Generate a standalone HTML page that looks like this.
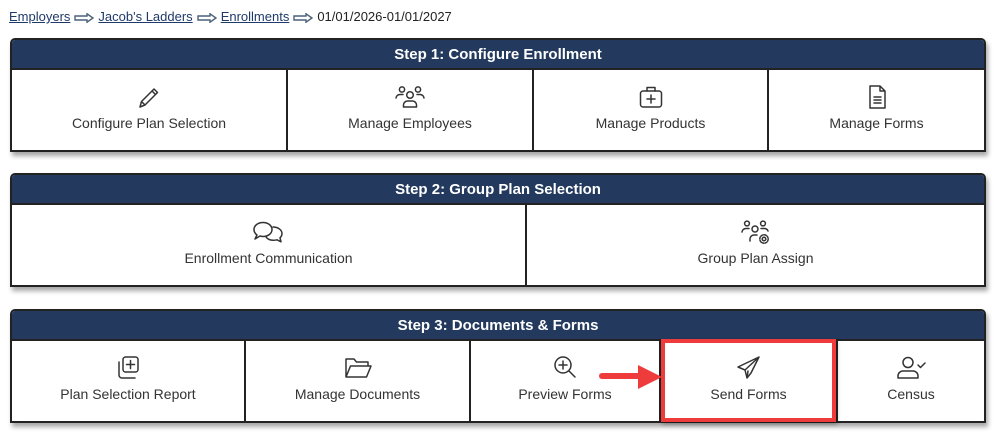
<!DOCTYPE html>
<html><head><style>
*{margin:0;padding:0;box-sizing:border-box}
body{width:999px;height:439px;background:#fff;font-family:"Liberation Sans",sans-serif;position:relative;overflow:hidden;color:#333}
.bc{position:absolute;left:9px;top:9px;font-size:13px;color:#222;white-space:nowrap}
.bc a{color:#1f3a6a;text-decoration:underline}
.ar{display:inline-block;vertical-align:middle;margin:0 4px}
.panel{position:absolute;left:10px;width:976px;border:2px solid #222;border-radius:5px 5px 0 0;box-shadow:2px 4px 5px rgba(0,0,0,.35);background:#fff}
.hd{height:30px;background:#233a5e;color:#fff;font-weight:bold;font-size:15px;text-align:center;line-height:30px;border-bottom:2px solid #222;border-radius:3px 3px 0 0}
.row{display:flex;height:80px}
.c{border-left:2px solid #222;text-align:center;font-size:14px;padding-top:13px;position:relative}
.c:first-child{border-left:none}
.c svg{display:block;margin:0 auto 4px;height:28px;fill:none;stroke:#333;stroke-width:1.5;stroke-linecap:round;stroke-linejoin:round}
</style></head><body>
<div class="bc"><a>Employers</a><svg class="ar" width="20" height="10" viewBox="0 0 20 10"><path d="M1 3h12V0.8L19 5l-6 4.2V7H1z" fill="none" stroke="#4a6078" stroke-width="1.4"/></svg><a>Jacob's Ladders</a><svg class="ar" width="20" height="10" viewBox="0 0 20 10"><path d="M1 3h12V0.8L19 5l-6 4.2V7H1z" fill="none" stroke="#4a6078" stroke-width="1.4"/></svg><a>Enrollments</a><svg class="ar" width="20" height="10" viewBox="0 0 20 10"><path d="M1 3h12V0.8L19 5l-6 4.2V7H1z" fill="none" stroke="#4a6078" stroke-width="1.4"/></svg>01/01/2026-01/01/2027</div>

<div class="panel" style="top:38px;height:114px">
<div class="hd">Step 1: Configure Enrollment</div>
<div class="row">
<div class="c" style="width:274px"><svg width="28" viewBox="0 0 28 28"><path d="M5 24l1.5-5.5L19 6l3.5 3.5L10 22zM17 8l3.5 3.5M6.5 18.5l3.5 3.5"/></svg>Configure Plan Selection</div>
<div class="c" style="width:246px"><svg width="34" viewBox="0 0 34 28"><circle cx="17" cy="12" r="3.3"/><circle cx="9" cy="6.5" r="2.6"/><circle cx="25" cy="6.5" r="2.6"/><path d="M10.5 24v-2a4 4 0 0 1 4-4h5a4 4 0 0 1 4 4v2zM3 15a4 4 0 0 1 4-3.5h3M31 15a4 4 0 0 0-4-3.5h-3"/></svg>Manage Employees</div>
<div class="c" style="width:235px"><svg width="28" viewBox="0 0 28 28"><rect x="3.5" y="8" width="21" height="16" rx="2.5"/><path d="M10 8V4.5h8V8M14 12v8M10 16h8"/></svg>Manage Products</div>
<div class="c" style="flex:1"><svg width="28" viewBox="0 0 28 28"><path d="M7 3h10l5 5v17H7zM17 3v5h5M11 14h7M11 17h7M11 20h7"/></svg>Manage Forms</div>
</div></div>

<div class="panel" style="top:173px;height:114px">
<div class="hd">Step 2: Group Plan Selection</div>
<div class="row">
<div class="c" style="width:513px"><svg width="34" viewBox="0 0 34 28"><path d="M5 17l-2 4 5-3c1 .3 2 .5 3 .5 5 0 9-3 9-7s-4-7-9-7-9 3-9 7c0 2 1 4 3 5.5z"/><path d="M21 9c5 0 9 3 9 6.5 0 1.7-.8 3.2-2 4.3l1 4-4-2c-1.5.4-2.5.5-4 .5-3.5 0-6-1.5-7.5-4"/></svg>Enrollment Communication</div>
<div class="c" style="flex:1"><svg width="34" viewBox="0 0 34 28"><circle cx="16" cy="11" r="3"/><circle cx="8" cy="5.5" r="2.4"/><circle cx="24" cy="5.5" r="2.4"/><path d="M11 23v-2a4 4 0 0 1 4-4h3M3 14a4 4 0 0 1 4-3.5h3M29 13a4 4 0 0 0-4-2.5h-3"/><circle cx="25" cy="21" r="1.8"/><circle cx="25" cy="21" r="4.2" stroke-dasharray="2 1.3"/></svg>Group Plan Assign</div>
</div></div>

<div class="panel" style="top:309px;height:114px">
<div class="hd">Step 3: Documents &amp; Forms</div>
<div class="row">
<div class="c" style="width:232px"><svg width="28" viewBox="0 0 28 28"><rect x="9" y="3" width="15" height="15" rx="2.5"/><path d="M5 8v13a3 3 0 0 0 3 3h13M16.5 6.5v8M12.5 10.5h8"/></svg>Plan Selection Report</div>
<div class="c" style="width:225px"><svg width="30" viewBox="0 0 30 28"><path d="M3 23V5h8l2.5 3H25v4M3 23l4.5-11H28l-4.5 11z"/></svg>Manage Documents</div>
<div class="c" style="width:190px"><svg width="28" viewBox="0 0 28 28"><circle cx="12" cy="11" r="8"/><path d="M12 7v8M8 11h8M18 17l6 6"/></svg>Preview Forms</div>
<div class="c" style="width:177px"><svg width="28" viewBox="0 0 28 28"><path d="M24 3L3 13l7 3 2 8 4-5 8-16zM10 16l14-13M12 24l1-7"/></svg>Send Forms</div>
<div class="c" style="flex:1"><svg width="34" viewBox="0 0 34 28"><circle cx="14" cy="8.5" r="5"/><path d="M4 24v-2a5 5 0 0 1 5-5h10a5 5 0 0 1 5 5v2zM24 11l2.5 2.5L31 9"/></svg>Census</div>
</div></div>

<div style="position:absolute;left:661px;top:339px;width:175px;height:83px;border:4px solid #ee3b3b;box-shadow:1px 2px 4px rgba(0,0,0,.3)"></div>
<svg style="position:absolute;left:598px;top:362px" width="66" height="30" viewBox="0 0 66 30"><path d="M4 14h38" stroke="#ee3b3b" stroke-width="6" stroke-linecap="round"/><path d="M40 3l24 12-24 12z" fill="#ee3b3b"/></svg>
</body></html>
